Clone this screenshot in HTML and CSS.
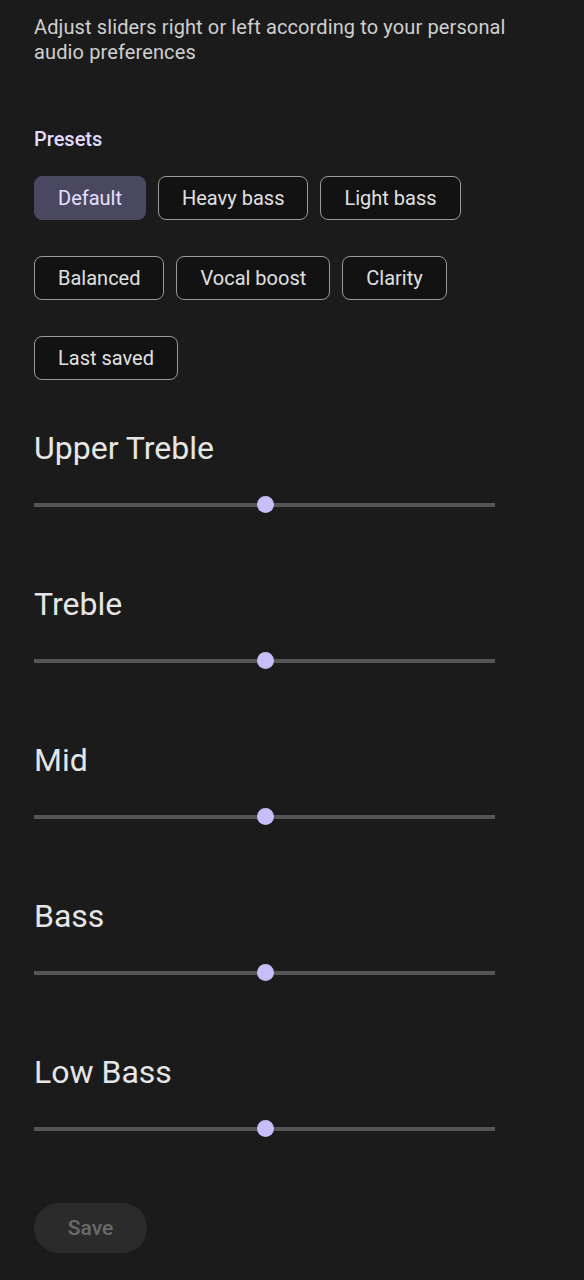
FILE: index.html
```html
<!DOCTYPE html>
<html lang="en">
<head>
<meta charset="utf-8">
<title>Equalizer</title>
<link rel="stylesheet" href="styles.css">
</head>
<body>
<main class="page">
  <p class="intro">Adjust sliders right or left according to your personal audio preferences</p>
  <h2 class="presets-title">Presets</h2>
  <div class="chips">
    <button class="chip chip-selected">Default</button>
    <button class="chip">Heavy bass</button>
    <button class="chip">Light bass</button>
    <button class="chip">Balanced</button>
    <button class="chip">Vocal boost</button>
    <button class="chip">Clarity</button>
    <button class="chip">Last saved</button>
  </div>
  <section class="band">
    <h3 class="band-title">Upper Treble</h3>
    <div class="slider"><div class="track"></div><div class="thumb" style="left: 50%"></div></div>
  </section>
  <section class="band">
    <h3 class="band-title">Treble</h3>
    <div class="slider"><div class="track"></div><div class="thumb" style="left: 50%"></div></div>
  </section>
  <section class="band">
    <h3 class="band-title">Mid</h3>
    <div class="slider"><div class="track"></div><div class="thumb" style="left: 50%"></div></div>
  </section>
  <section class="band">
    <h3 class="band-title">Bass</h3>
    <div class="slider"><div class="track"></div><div class="thumb" style="left: 50%"></div></div>
  </section>
  <section class="band">
    <h3 class="band-title">Low Bass</h3>
    <div class="slider"><div class="track"></div><div class="thumb" style="left: 50%"></div></div>
  </section>
  <button class="save" disabled>Save</button>
</main>
</body>
</html>
```
FILE: styles.css
```css
html, body {
  margin: 0;
  padding: 0;
  background: #1b1b1b;
}
body {
  font-family: Roboto, "Noto Sans", sans-serif;
  color: #e3e3e3;
}
.page {
  padding: 15px 34px 26px 34px;
}
.intro {
  margin: 0;
  font-size: 20px;
  line-height: 25px;
  color: #cfcfcf;
  letter-spacing: 0.12px;
}
.presets-title {
  margin: 62px 0 0 0;
  font-size: 20px;
  line-height: 24px;
  font-weight: 500;
  color: #e2ddff;
}
.chips {
  display: flex;
  flex-wrap: wrap;
  column-gap: 12px;
  row-gap: 36px;
  margin-top: 25px;
  width: 450px;
}
.chip {
  height: 44px;
  padding: 0 23px;
  border: 1px solid #9a9a9a;
  border-radius: 8px;
  background: #121212;
  color: #e0e0e0;
  font-family: Roboto, "Noto Sans", sans-serif;
  font-size: 20px;
  font-weight: 400;
}
.chip-selected {
  background: #4a4761;
  border-color: #4a4761;
  color: #e6e0ff;
}
.band {
  margin-top: 48px;
  width: 461px;
}
.band + .band {
  margin-top: 67px;
}
.band-title {
  margin: 0;
  font-size: 32px;
  line-height: 40px;
  font-weight: 400;
  color: #e6e6e6;
}
.slider {
  position: relative;
  height: 24px;
  margin-top: 25px;
}
.track {
  position: absolute;
  left: 0;
  right: 0;
  top: 10px;
  height: 4px;
  background: #555555;
}
.thumb {
  position: absolute;
  top: 3px;
  width: 17px;
  height: 17px;
  margin-left: -8px;
  border-radius: 50%;
  background: #c6bef7;
}
.thumb::before {
  content: "";
  position: absolute;
  left: 8px;
  top: -4px;
  width: 1px;
  height: 25px;
  background: #6e6a86;
  z-index: -1;
}
.save {
  display: block;
  margin-top: 62px;
  width: 113px;
  height: 50px;
  border: none;
  border-radius: 25px;
  background: #2b2b2b;
  color: #6a6a6a;
  font-family: Roboto, "Noto Sans", sans-serif;
  font-size: 21px;
  font-weight: 500;
}
```
